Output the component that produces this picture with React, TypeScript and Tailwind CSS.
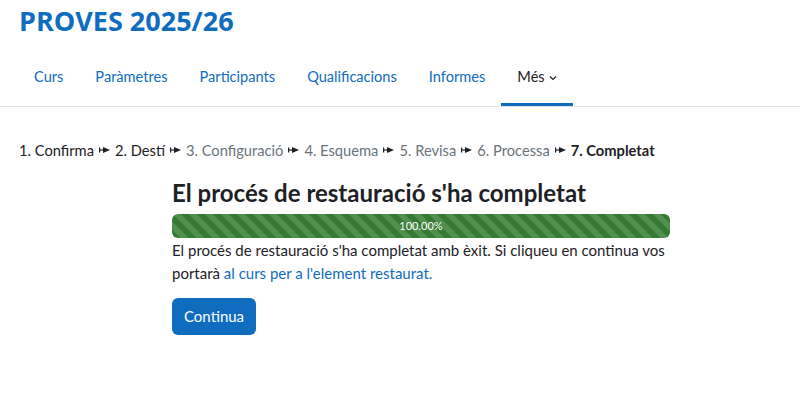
import React from 'react';

const font = { fontFamily: 'Lato, "Open Sans", Arial, sans-serif' };
const titleFont = { fontFamily: '"Open Sans", "Noto Sans", Arial, sans-serif' };

const tabs = ['Curs', 'Paràmetres', 'Participants', 'Qualificacions', 'Informes'];

const steps = [
  { label: '1. Confirma', state: 'done' },
  { label: '2. Destí', state: 'done' },
  { label: '3. Configuració', state: 'todo' },
  { label: '4. Esquema', state: 'todo' },
  { label: '5. Revisa', state: 'todo' },
  { label: '6. Processa', state: 'todo' },
  { label: '7. Completat', state: 'current' },
];

function Sep() {
  return (
    <svg className="mx-[5px] inline-block" width="11" height="8" viewBox="0 0 11 8" fill="#1d2125">
      <rect x="0" y="1.5" width="1.2" height="5" />
      <rect x="0" y="3.4" width="6" height="1.2" />
      <path d="M4 1 L11 4 L4 7 Z" />
    </svg>
  );
}

export default function App() {
  return (
    <div className="w-[800px] h-[405px] bg-white overflow-hidden text-[#1d2125]" style={font}>
      {/* Capçalera del curs */}
      <div className="px-[19px] pt-[4px] h-[47px]" style={titleFont}>
        <h1 className="text-[27px] font-bold leading-[34px] text-[#0f6cbf]">PROVES 2025/26</h1>
      </div>

      <nav className="flex pl-[18px] h-[60px] border-b border-[#dee2e6]">
        {tabs.map((t) => (
          <div key={t} className="flex items-center px-4 text-[14.6px] text-[#0f6cbf]">
            {t}
          </div>
        ))}
        <div className="flex items-center px-4 text-[14.6px] text-[#1d2125] border-b-[3px] border-[#0f6cbf] pt-[3px]">
          Més
          <svg className="ml-[4px] mt-[2px]" width="8" height="6" viewBox="0 0 8 6" fill="none" stroke="#1d2125" strokeWidth="1.2">
            <path d="M1 1.5 L4 4.5 L7 1.5" />
          </svg>
        </div>
      </nav>

      {/* Passos de la restauració */}
      <div className="px-[19px] pt-[32px] text-[14.7px] leading-[22px] flex items-center whitespace-nowrap">
        {steps.map((s, i) => (
          <React.Fragment key={s.label}>
            {i > 0 && <Sep />}
            <span
              className={
                s.state === 'current'
                  ? 'font-bold text-[#1d2125]'
                  : s.state === 'done'
                  ? 'text-[#1d2125]'
                  : 'text-[#6a737b]'
              }
            >
              {s.label}
            </span>
          </React.Fragment>
        ))}
      </div>

      <div className="ml-[172px] w-[498px] pt-[16px]">
        <h2 className="text-[24px] font-bold leading-[32px]">El procés de restauració s'ha completat</h2>
        <div
          className="mt-[5px] h-[24px] rounded-[6px] bg-[#357a32] flex items-center justify-center text-white text-[11px]"
          style={{
            backgroundImage:
              'linear-gradient(45deg, rgba(255,255,255,0.15) 25%, transparent 25%, transparent 50%, rgba(255,255,255,0.15) 50%, rgba(255,255,255,0.15) 75%, transparent 75%, transparent)',
            backgroundSize: '16px 16px',
          }}
        >
          100.00%
        </div>
        <p className="text-[15px] leading-[23px] mt-[1px]">
          El procés de restauració s'ha completat amb èxit. Si cliqueu en continua vos portarà{' '}
          <a className="text-[#0f6cbf]">al curs per a l'element restaurat.</a>
        </p>
        <button className="mt-[13px] h-[37px] px-[12px] rounded-[6px] bg-[#0f6cbf] text-white text-[15px]">
          Continua
        </button>
      </div>
    </div>
  );
}
